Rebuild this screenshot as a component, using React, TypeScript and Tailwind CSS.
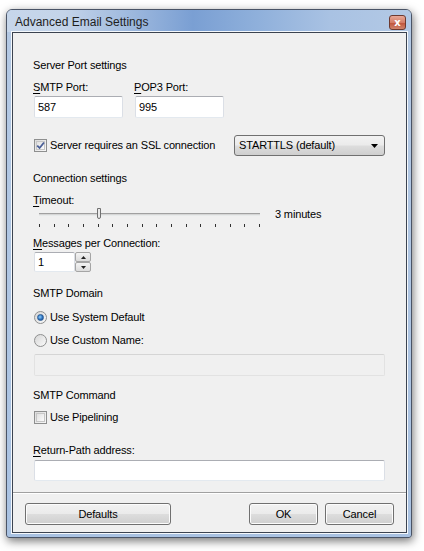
import React from 'react';

const font = { fontFamily: '"Liberation Sans", Arial, sans-serif' };

function Label({ text, ul, className = '' }: { text: string; ul?: number; className?: string }) {
  if (ul === undefined) return <div className={`h-[14px] leading-[14px] whitespace-nowrap ${className}`}>{text}</div>;
  return (
    <div className={`h-[14px] leading-[14px] whitespace-nowrap ${className}`}>
      {text.slice(0, ul)}
      <span className="underline underline-offset-2">{text[ul]}</span>
      {text.slice(ul + 1)}
    </div>
  );
}

function TextBox({ value, className = '', disabled }: { value?: string; className?: string; disabled?: boolean }) {
  return (
    <div
      className={`rounded-[2px] border flex items-center pl-[3px] ${
        disabled
          ? 'bg-[#f0f0f0] border-[#d5d5d5] border-l-[#e2e2e2] border-r-[#e2e2e2] border-b-[#e2e2e2]'
          : 'bg-white border-[#abadb3] border-l-[#dbdfe6] border-r-[#dbdfe6] border-b-[#e3e9ef]'
      } ${className}`}
    >
      {value}
    </div>
  );
}

function Checkbox({ checked }: { checked?: boolean }) {
  return (
    <div className="w-[13px] h-[13px] border border-[#8e8f8f] bg-[linear-gradient(135deg,#dcdcdc,#f7f7f7)] p-[1px] shrink-0">
      <div className="w-full h-full border border-[#c6c6c6] bg-[linear-gradient(135deg,#e0e0e0,#fbfbfb)] relative">
        {checked && (
          <svg viewBox="0 0 9 9" className="absolute -left-[1px] -top-[1px] w-[9px] h-[9px]">
            <path d="M1.2 4.6 L3.6 7 L8 1.5" fill="none" stroke="#4a5f97" strokeWidth="1.8" />
          </svg>
        )}
      </div>
    </div>
  );
}

function Radio({ checked }: { checked?: boolean }) {
  return (
    <div className="w-[13px] h-[13px] rounded-full border border-[#8e8f8f] bg-[linear-gradient(135deg,#d6d6d6,#fafafa)] flex items-center justify-center shrink-0">
      {checked && (
        <div className="w-[7px] h-[7px] rounded-full bg-[radial-gradient(circle_at_40%_40%,#8ad0ff,#2a6bb8_60%,#1a4f8e)] border border-[#2a5b94]" />
      )}
    </div>
  );
}

function Button({ children, className = '' }: { children: React.ReactNode; className?: string }) {
  return (
    <div
      className={`h-[22px] rounded-[3px] border border-[#707070] bg-[linear-gradient(180deg,#f2f2f2_0%,#ebebeb_48%,#dddddd_52%,#cfcfcf_100%)] shadow-[inset_0_0_0_1px_#fcfcfc] flex items-center justify-center ${className}`}
    >
      {children}
    </div>
  );
}

function Slider() {
  const ticks = Array.from({ length: 16 }, (_, i) => i);
  return (
    <div className="flex items-start h-[24px] ml-[6px]">
      <div className="relative w-[221px] h-[24px]">
        <div className="absolute left-0 right-0 top-[6px] h-[3px] border-t border-[#a0a0a0] border-b border-b-[#e7eaea] bg-[#d6d6d6]" />
        <div className="absolute left-[58px] top-[1px] w-[4px] h-[11px] border border-[#707070] rounded-b-[2px] bg-[#eaeaea]" />
        {ticks.map((i) => (
          <div
            key={i}
            className="absolute top-[17px] w-[1px] h-[3px] bg-[#303030]"
            style={{ left: Math.round(i * 14.67) }}
          />
        ))}
      </div>
      <div className="ml-[15px] leading-[14px]">3 minutes</div>
    </div>
  );
}

export default function App() {
  return (
    <div className="min-h-screen bg-white pt-[9px] pl-[6px] text-[11px] tracking-[-0.15px] text-black" style={font}>
      <div className="w-[406px] h-[529px] rounded-t-[6px] rounded-b-[3px] border border-[#4a5466] bg-[linear-gradient(180deg,#b4c9e4_0%,#a9c2e2_100%)] shadow-[1px_3px_10px_rgba(0,0,0,0.55)] flex flex-col pl-[5px] pr-[4px] pb-[4px]">
        <div className="h-[22px] -ml-[5px] -mr-[4px] pl-[8px] pr-[5px] rounded-t-[5px] bg-[linear-gradient(90deg,#c6d6ea_0%,#c4d4e9_14%,#7a9fd3_46%,#8fb0db_62%,#a9c2e3_80%,#b3c9e5_100%)] flex items-center justify-between">
          <span className="text-[12px] tracking-normal text-[#1e1e1e] mt-[1px]">Advanced Email Settings</span>
          <div className="w-[17px] h-[15px] mt-[3px] rounded-[3px] border border-[#6d3a30] bg-[linear-gradient(180deg,#e8a898_0%,#d47d66_50%,#c0533a_52%,#d0846c_100%)] flex items-center justify-center">
            <span className="text-white text-[10px] font-bold leading-none" style={{ fontFamily: '"DejaVu Sans", sans-serif' }}>
              x
            </span>
          </div>
        </div>
        <div className="flex-1 border border-[#3b4350] shadow-[0_0_0_1px_#f4f8fc] bg-[#f0f0f0] flex flex-col">
          <div className="flex flex-col pl-[20px] pr-[21px]">
            <Label text="Server Port settings" className="mt-[25px]" />
            <div className="flex mt-[8px] gap-[11px]">
              <div className="flex flex-col w-[90px]">
                <Label text="SMTP Port:" ul={0} />
                <TextBox value="587" className="mt-[2px] h-[22px] ml-[1px]" />
              </div>
              <div className="flex flex-col w-[90px]">
                <Label text="POP3 Port:" ul={0} />
                <TextBox value="995" className="mt-[2px] h-[22px] ml-[1px]" />
              </div>
            </div>
            <div className="flex items-center mt-[17px] h-[21px] ml-[1px]">
              <Checkbox checked />
              <span className="ml-[3px] whitespace-nowrap">Server requires an SSL connection</span>
              <div className="ml-auto w-[151px] h-[21px] rounded-[3px] border border-[#707070] bg-[linear-gradient(180deg,#f2f2f2_0%,#ebebeb_48%,#dddddd_52%,#cfcfcf_100%)] flex items-center pl-[4px] pr-[6px] justify-between">
                <span>STARTTLS (default)</span>
                <svg width="7" height="4" viewBox="0 0 7 4">
                  <path d="M0 0 H7 L3.5 4 Z" fill="#000" />
                </svg>
              </div>
            </div>
            <Label text="Connection settings" className="mt-[15px]" />
            <Label text="Timeout:" ul={0} className="mt-[8px]" />
            <Slider />
            <Label text="Messages per Connection:" ul={0} className="mt-[5px]" />
            <div className="flex mt-[2px] ml-[1px] h-[20px]">
              <TextBox value="1" className="w-[41px] h-[20px]" />
              <div className="flex flex-col w-[16px] h-[20px]">
                {[0, 1].map((i) => (
                  <div
                    key={i}
                    className="h-[10px] border border-[#a5a5a5] rounded-[2px] bg-[linear-gradient(180deg,#f4f4f4,#dcdcdc)] flex items-center justify-center"
                  >
                    <svg width="5" height="3" viewBox="0 0 5 3">
                      <path d={i === 0 ? 'M0 3 H5 L2.5 0 Z' : 'M0 0 H5 L2.5 3 Z'} fill="#222" />
                    </svg>
                  </div>
                ))}
              </div>
            </div>
            <Label text="SMTP Domain" className="mt-[14px]" />
            <div className="flex items-center mt-[10px] h-[14px] ml-[1px]">
              <Radio checked />
              <span className="ml-[3px]">Use System Default</span>
            </div>
            <div className="flex items-center mt-[9px] h-[14px] ml-[1px]">
              <Radio />
              <span className="ml-[3px]">Use Custom Name:</span>
            </div>
            <TextBox disabled className="mt-[7px] h-[22px] ml-[1px]" />
            <Label text="SMTP Command" className="mt-[12px]" />
            <div className="flex items-center mt-[8px] h-[14px] ml-[1px]">
              <Checkbox />
              <span className="ml-[3px]">Use Pipelining</span>
            </div>
            <Label text="Return-Path address:" ul={0} className="mt-[19px]" />
            <TextBox className="mt-[3px] h-[21px] ml-[1px]" />
          </div>
          <div className="mt-[11px] h-[2px] border-t border-[#a0a0a0] border-b border-b-white" />
          <div className="flex mt-[9px] px-[12px]">
            <Button className="w-[146px]">Defaults</Button>
            <Button className="w-[69px] ml-auto">OK</Button>
            <Button className="w-[69px] ml-[7px]">Cancel</Button>
          </div>
        </div>
      </div>
    </div>
  );
}
